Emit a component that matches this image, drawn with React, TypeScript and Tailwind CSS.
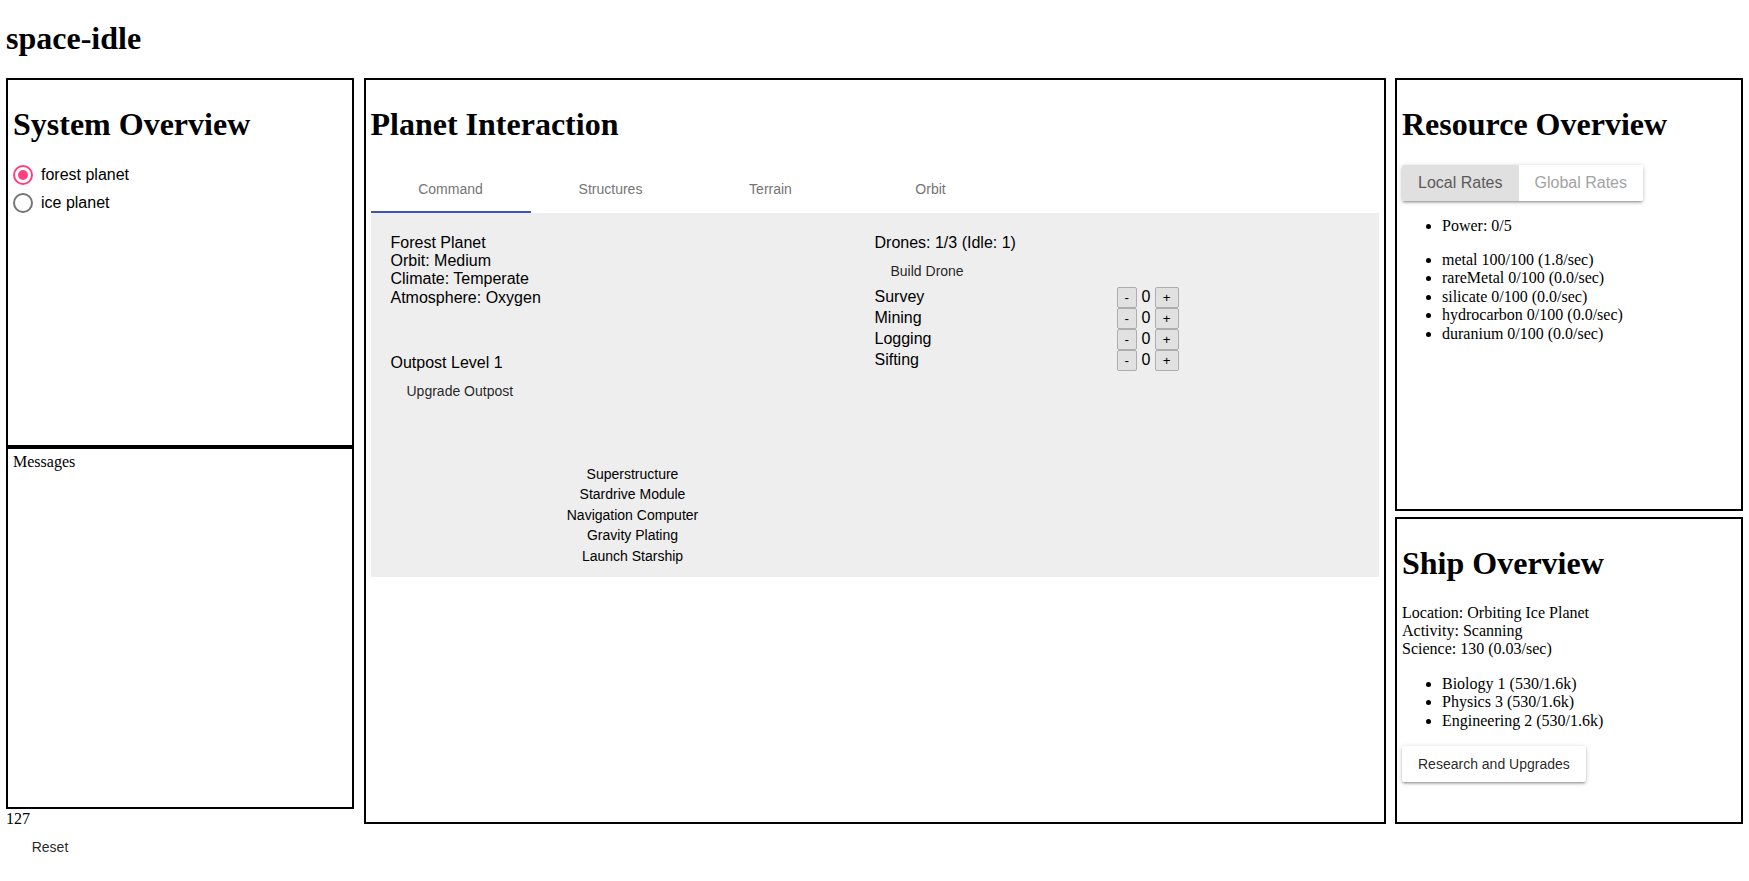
import type { ReactNode } from 'react'

const panel = 'border-2 border-black p-[5px]'
const heading = 'text-[32px] font-bold leading-[36.8px] my-[21.44px]'
const sans = "font-['Liberation_Sans',Arial,sans-serif]"

function TextButton({ children }: { children: ReactNode }) {
  return (
    <div className="flex">
      <button className={`${sans} h-[36px] min-w-[88px] rounded-[2px] px-4 pt-[1px] text-[14px] leading-[16px] text-[rgba(0,0,0,0.87)]`}>
        {children}
      </button>
    </div>
  )
}

function SmallButton({ children }: { children: ReactNode }) {
  return (
    <button className={`${sans} inline-block rounded-[2px] border border-[#adadad] bg-[#e1e1e1] px-[7px] py-[2px] text-[13.33px] leading-[15px] text-black`}>
      {children}
    </button>
  )
}

function Radio({ checked, label }: { checked: boolean; label: string }) {
  return (
    <div className="flex h-[28px] items-center gap-[8px]">
      <svg width="20" height="20" viewBox="0 0 20 20">
        <circle cx="10" cy="10" r="9" fill="none" stroke={checked ? '#ff4081' : '#757575'} strokeWidth="2" />
        {checked && <circle cx="10" cy="10" r="5" fill="#ff4081" />}
      </svg>
      <span className={`${sans} text-[16px] leading-[18.4px]`}>{label}</span>
    </div>
  )
}

function LeftColumn() {
  return (
    <div className="w-[348px]">
      <div className={`${panel} h-[369px]`}>
        <h1 className="mt-[21.44px] mb-[18px] text-[32px] font-bold leading-[36.8px]">System Overview</h1>
        <Radio checked label="forest planet" />
        <Radio checked={false} label="ice planet" />
      </div>
      <div className="h-[362px] border-2 border-black px-[5px] pt-[4px]">Messages</div>
      <div className="pt-[1px]">127</div>
      <TextButton>Reset</TextButton>
    </div>
  )
}

const tabs = ['Command', 'Structures', 'Terrain', 'Orbit']
const drones = ['Survey', 'Mining', 'Logging', 'Sifting']
const ship = ['Superstructure', 'Stardrive Module', 'Navigation Computer', 'Gravity Plating', 'Launch Starship']

function PlanetInteraction() {
  return (
    <div className={`${panel} h-[746px] w-[1022px]`}>
      <h1 className={heading}>Planet Interaction</h1>
      <div className={`${sans} flex h-[48px]`}>
        {tabs.map((t, i) => (
          <div key={t} className="relative flex w-[160px] items-center justify-center pt-[2px] text-[14px] text-[#757575]">
            {t}
            {i === 0 && <div className="absolute bottom-0 left-0 h-[2px] w-full bg-[#3f51b5]" />}
          </div>
        ))}
      </div>
      <div className={`${sans} flex h-[364px] bg-[#eeeeee] px-[20px] pt-[21px] pb-[20px] text-[16px] leading-[18.4px]`}>
        <div className="w-[484px]">
          <div>Forest Planet</div>
          <div>Orbit: Medium</div>
          <div>Climate: Temperate</div>
          <div>Atmosphere: Oxygen</div>
          <div className="mt-[46.4px]">Outpost Level 1</div>
          <TextButton>Upgrade Outpost</TextButton>
          <div className="mt-[55.6px] text-center text-[14px] leading-[20.5px]">
            {ship.map((s) => (
              <div key={s}>{s}</div>
            ))}
          </div>
        </div>
        <div className="w-[484px]">
          <div>Drones: 1/3 (Idle: 1)</div>
          <TextButton>Build Drone</TextButton>
          <table className="-mt-[1px]">
            <tbody>
              {drones.map((d) => (
                <tr key={d}>
                  <td className="w-[242px] p-0">{d}</td>
                  <td className="p-0 whitespace-nowrap">
                    <SmallButton>-</SmallButton> 0 <SmallButton>+</SmallButton>
                  </td>
                </tr>
              ))}
            </tbody>
          </table>
        </div>
      </div>
    </div>
  )
}

const resources = [
  'metal 100/100 (1.8/sec)',
  'rareMetal 0/100 (0.0/sec)',
  'silicate 0/100 (0.0/sec)',
  'hydrocarbon 0/100 (0.0/sec)',
  'duranium 0/100 (0.0/sec)',
]

function RightColumn() {
  return (
    <div className="w-[348px]">
      <div className={`${panel} h-[433px]`}>
        <h1 className={heading}>Resource Overview</h1>
        <div className={`${sans} inline-flex overflow-hidden rounded-[2px] text-[16px] shadow-[0_1px_5px_rgba(0,0,0,0.2),0_2px_2px_rgba(0,0,0,0.14),0_3px_1px_-2px_rgba(0,0,0,0.12)]`}>
          <div className="flex h-[36px] items-center bg-[#e0e0e0] px-4 pt-[2px] text-[#5a5a5a]">Local Rates</div>
          <div className="flex h-[36px] items-center bg-white px-4 pt-[2px] text-[#a3a3a3]">Global Rates</div>
        </div>
        <ul className="my-[16px] list-disc pl-[40px]">
          <li>Power: 0/5</li>
        </ul>
        <ul className="my-[16px] list-disc pl-[40px]">
          {resources.map((r) => (
            <li key={r}>{r}</li>
          ))}
        </ul>
      </div>
      <div className={`${panel} mt-[6px] h-[307px]`}>
        <h1 className={heading}>Ship Overview</h1>
        <div>Location: Orbiting Ice Planet</div>
        <div>Activity: Scanning</div>
        <div>Science: 130 (0.03/sec)</div>
        <ul className="my-[16px] list-disc pl-[40px]">
          <li>Biology 1 (530/1.6k)</li>
          <li>Physics 3 (530/1.6k)</li>
          <li>Engineering 2 (530/1.6k)</li>
        </ul>
        <div className="flex">
          <button className={`${sans} h-[36px] min-w-[88px] rounded-[2px] bg-white px-4 text-[14px] text-[rgba(0,0,0,0.87)] shadow-[0_1px_5px_rgba(0,0,0,0.2),0_2px_2px_rgba(0,0,0,0.14),0_3px_1px_-2px_rgba(0,0,0,0.12)]`}>
            Research and Upgrades
          </button>
        </div>
      </div>
    </div>
  )
}

export default function App() {
  return (
    <div className="min-h-screen bg-white px-[6px] font-['Liberation_Serif',serif] text-[16px] leading-[18.4px] text-black">
      <h1 className="pt-[19.5px] pb-[21.7px] text-[32px] font-bold leading-[36.8px]">space-idle</h1>
      <div className="flex items-start justify-between">
        <LeftColumn />
        <PlanetInteraction />
        <RightColumn />
      </div>
    </div>
  )
}
